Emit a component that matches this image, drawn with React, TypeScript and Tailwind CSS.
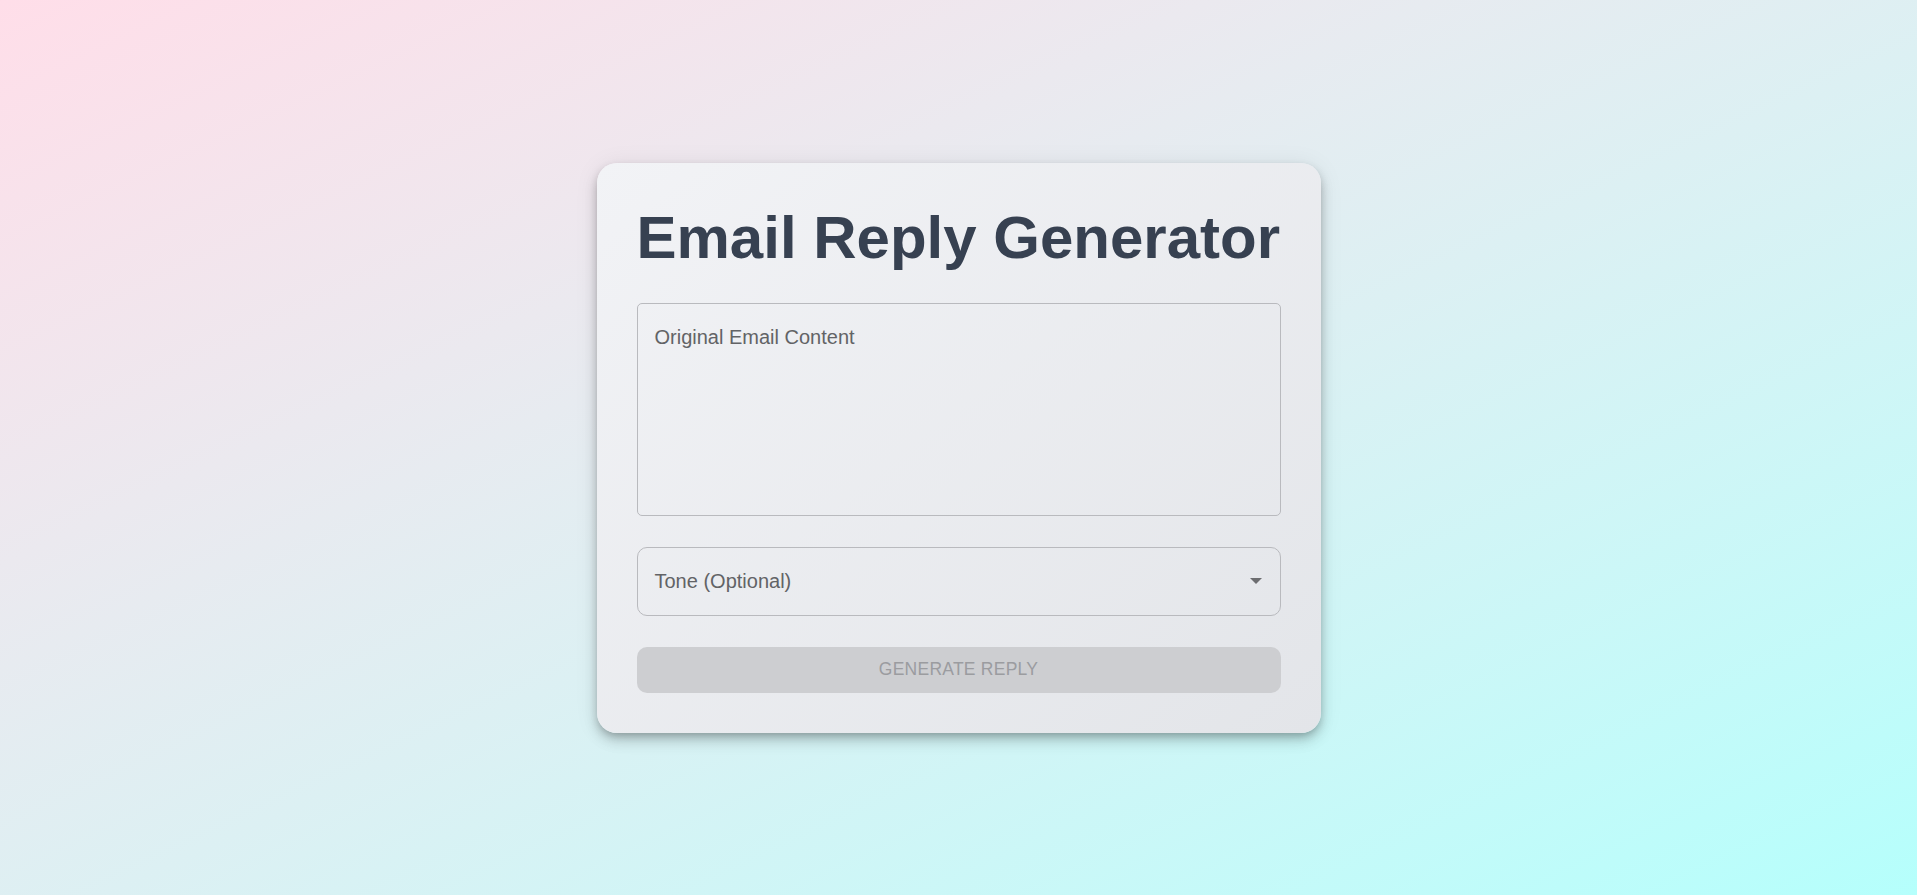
import { useState } from 'react';

export default function App() {
  const [email, setEmail] = useState('');
  const [tone, setTone] = useState('');

  return (
    <div
      className="min-h-screen w-full flex items-center justify-center bg-gradient-to-br from-[#ffdee9] to-[#b5fffc]"
      style={{ fontFamily: '"Liberation Sans", Arial, sans-serif' }}
    >
      {/* Card */}
      <div className="w-[724px] p-[40px] rounded-[20px] bg-gradient-to-br from-[#f2f3f6] to-[#e3e5e9] shadow-[0_4px_8px_-2px_rgba(0,0,0,0.25),0_8px_14px_rgba(0,0,0,0.14),0_2px_24px_rgba(0,0,0,0.08)]">
        <h1 className="text-[60px] leading-[70px] font-bold text-[#374151] mb-[30px] whitespace-nowrap">
          Email Reply Generator
        </h1>

        {/* Original email */}
        <textarea
          value={email}
          onChange={(e) => setEmail(e.target.value)}
          placeholder="Original Email Content"
          className="block w-full h-[213px] resize-none bg-transparent border border-[#b9babe] rounded-[5px] px-[17px] pt-[19px] text-[20px] leading-[28px] text-[#333] placeholder:text-[#626366] outline-none mb-[31px]"
        />

        {/* Tone select */}
        <div className="relative h-[69px] border border-[#b9babe] rounded-[10px] flex items-center pl-[17px] pr-[18px] mb-[31px]">
          <select
            value={tone}
            onChange={(e) => setTone(e.target.value)}
            className="absolute inset-0 opacity-0 cursor-pointer"
          >
            <option value="">None</option>
            <option value="professional">Professional</option>
            <option value="casual">Casual</option>
            <option value="friendly">Friendly</option>
          </select>
          <span className="flex-1 text-[20px] leading-[28px] text-[#626366]">
            {tone ? tone.charAt(0).toUpperCase() + tone.slice(1) : 'Tone (Optional)'}
          </span>
          <svg width="12" height="6" viewBox="0 0 12 6" className="text-[#6c6d70]">
            <path d="M0 0 L12 0 L6 6 Z" fill="currentColor" />
          </svg>
        </div>

        {/* Submit */}
        <button
          disabled
          className="w-full h-[46px] rounded-[10px] bg-[#cdced1] text-[#9b9ca0] text-[17.5px] uppercase tracking-[0.25px] flex items-center justify-center"
        >
          Generate Reply
        </button>
      </div>
    </div>
  );
}
